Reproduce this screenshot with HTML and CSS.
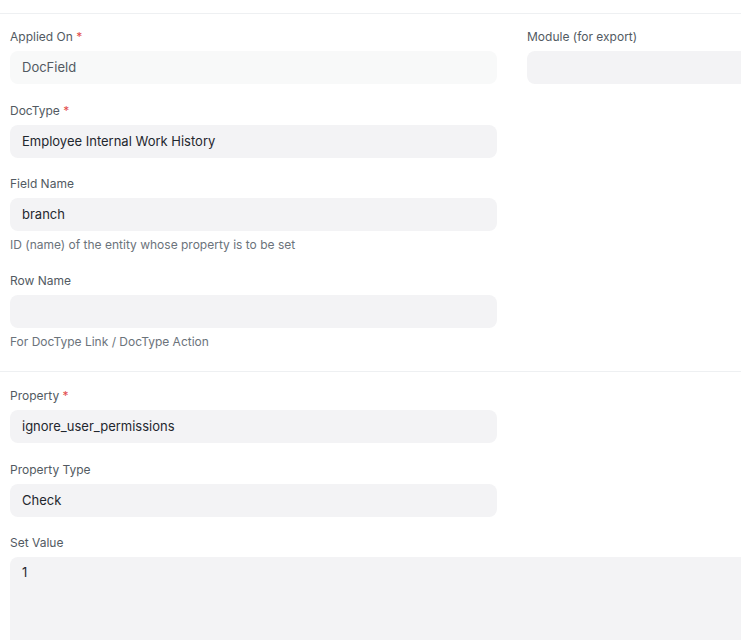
FILE: index.html
```html
<!DOCTYPE html>
<html lang="en">
<head>
    <meta charset="UTF-8">
    <meta name="viewport" content="width=device-width, initial-scale=1.0">
    <title>Property Setter</title>
    <link rel="stylesheet" href="styles.css">
</head>
<body>
    <div class="page">
        <div class="section-top"></div>

        <div class="section first">
            <div class="columns">
                <div class="column">
                    <div class="form-group">
                        <label class="control-label">Applied On <span class="reqd">*</span></label>
                        <div class="control-input readonly">DocField</div>
                    </div>
                    <div class="form-group">
                        <label class="control-label">DocType <span class="reqd">*</span></label>
                        <div class="control-input">Employee Internal Work History</div>
                    </div>
                    <div class="form-group">
                        <label class="control-label">Field Name</label>
                        <div class="control-input">branch</div>
                        <p class="help-box">ID (name) of the entity whose property is to be set</p>
                    </div>
                    <div class="form-group">
                        <label class="control-label">Row Name</label>
                        <div class="control-input"></div>
                        <p class="help-box">For DocType Link / DocType Action</p>
                    </div>
                </div>
                <div class="column">
                    <div class="form-group">
                        <label class="control-label">Module (for export)</label>
                        <div class="control-input"></div>
                    </div>
                </div>
            </div>
        </div>

        <div class="section">
            <div class="columns">
                <div class="column">
                    <div class="form-group">
                        <label class="control-label">Property <span class="reqd">*</span></label>
                        <div class="control-input">ignore_user_permissions</div>
                    </div>
                    <div class="form-group">
                        <label class="control-label">Property Type</label>
                        <div class="control-input">Check</div>
                    </div>
                </div>
                <div class="column"></div>
            </div>
            <div class="form-group">
                <label class="control-label">Set Value</label>
                <div class="control-input textarea">1</div>
            </div>
        </div>
    </div>
</body>
</html>
```

FILE: styles.css
```css
:root {
    --control-bg: #f3f3f5;
    --readonly-bg: #f8f9f9;
    --border-color: #eef0f2;
    --text-color: #1f272e;
    --label-color: #525a62;
    --muted-color: #6b737b;
    --red: #e24c4c;
    --radius: 8px;
}

* {
    margin: 0;
    padding: 0;
    box-sizing: border-box;
    font-family: Inter, 'Noto Sans', sans-serif;
}

html, body {
    overflow: hidden;
    background: #ffffff;
}

body {
    color: var(--text-color);
}

.page {
    width: 1034px;
}

.section-top {
    height: 13px;
}

.section {
    border-top: 1px solid var(--border-color);
    padding: 14px 10px 4px 10px;
}

.section.first {
    padding-top: 13px;
}

.columns {
    display: grid;
    grid-template-columns: 487px 487px;
    column-gap: 30px;
}

.form-group {
    margin-bottom: 16.5px;
}

.control-label {
    display: block;
    font-size: 12px;
    line-height: 20px;
    color: var(--label-color);
    margin-bottom: 4px;
}

.reqd {
    color: var(--red);
}

.control-input {
    height: 33px;
    background: var(--control-bg);
    border-radius: var(--radius);
    padding: 0 12px;
    font-size: 13px;
    line-height: 33px;
    color: var(--text-color);
}

.control-input.readonly {
    background: var(--readonly-bg);
    color: var(--label-color);
}

.control-input.textarea {
    height: 300px;
    line-height: 20px;
    padding-top: 5px;
}

.help-box {
    font-size: 12px;
    line-height: 18px;
    color: var(--muted-color);
    margin-top: 5px;
}
```
